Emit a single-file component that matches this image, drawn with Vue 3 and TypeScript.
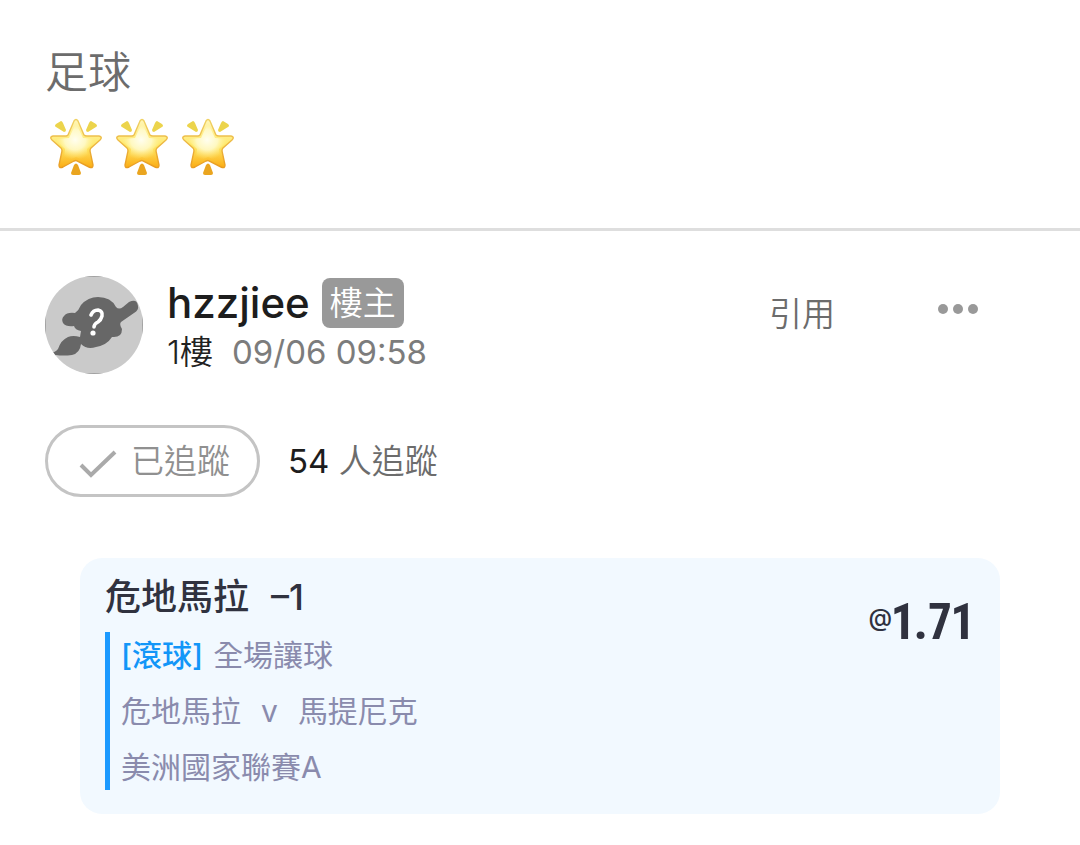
<script setup lang="ts">
import { ref } from 'vue'

const stars = [0, 1, 2]
const following = ref(true)
const post = { author: 'hzzjiee', badge: '樓主', floor: '1樓', time: '09/06 09:58', followers: 54 }
const bet = {
  pick: '危地馬拉',
  handicap: '–1',
  tag: '[滾球]',
  market: '全場讓球',
  home: '危地馬拉',
  away: '馬提尼克',
  league: '美洲國家聯賽A',
  odds: '1.71',
}
</script>

<template>
  <main class="page">
    <section class="topic">
      <h1 class="topic-title">足球</h1>
      <div class="stars" role="img" aria-label="三顆星">
        <svg v-for="n in stars" :key="n" class="star" viewBox="0 0 54 58" aria-hidden="true">
          <defs>
            <linearGradient :id="`body-${n}`" x1="0" y1="0" x2="0" y2="1">
              <stop offset="0" stop-color="#fff6b8" />
              <stop offset="0.55" stop-color="#ffe96a" />
              <stop offset="1" stop-color="#fbac12" />
            </linearGradient>
            <radialGradient :id="`glow-${n}`" cx="0.48" cy="0.42" r="0.5">
              <stop offset="0" stop-color="#fffef0" />
              <stop offset="0.5" stop-color="#fffbd0" stop-opacity="0.85" />
              <stop offset="1" stop-color="#ffee80" stop-opacity="0" />
            </radialGradient>
            <linearGradient :id="`edge-${n}`" x1="0" y1="0" x2="0" y2="1">
              <stop offset="0" stop-color="#f0d264" />
              <stop offset="1" stop-color="#e99c20" />
            </linearGradient>
          </defs>
          <path d="M7 6L12 3Q13 3 14 5L17 12Q17 14 15 14L7 9Q5 8 7 6Z" fill="#ecd44c" />
          <path d="M47 6L42 3Q41 3 40 5L37 12Q37 14 39 14L47 9Q49 8 47 6Z" fill="#ecd44c" />
          <path d="M25 47Q27 44 29 47L32 55Q32 57 30 57H24Q22 57 22 55Z" fill="#eaa51f" />
          <path
            d="M25 3Q27 0 29 3L35 17Q36 18 38 18L50 18Q54 19 51 22L42 30Q41 31 41 33L44 47Q44 51 40 49L28 43Q27 42 25 43L14 49Q10 51 10 47L13 33Q13 31 12 30L3 22Q0 19 4 18L17 18Q18 18 19 17Z"
            :fill="`url(#body-${n})`"
            :stroke="`url(#edge-${n})`"
            stroke-width="1.4"
          />
          <path
            d="M27 5L34 20L48 21L38 31L40 45L27 39L14 45L16 31L6 21L20 20Z"
            :fill="`url(#glow-${n})`"
          />
        </svg>
      </div>
    </section>

    <article class="post">
      <header class="post-head">
        <svg class="avatar" viewBox="0 0 98 98" role="img" aria-label="頭像">
          <defs>
            <clipPath id="avatar-clip"><circle cx="49" cy="49" r="49" /></clipPath>
          </defs>
          <g clip-path="url(#avatar-clip)">
            <rect width="98" height="98" fill="#cacaca" />
            <path
              d="M19 40Q22 36 30 37Q34 34 36 29Q43 21 53 21Q66 21 71 31Q74 34 78 31L84 26Q92 22 93 30Q94 34 89 37L76 46Q74 48 77 53Q77 62 67 61Q62 69 51 71Q42 74 36 68Q35 77 27 79Q18 80 11 79L3 84L4 77Q10 77 13 73Q16 64 23 61Q28 59 35 61L36 55Q30 54 29 50Q21 51 18 47Q16 43 19 40Z"
              fill="#676767"
            />
            <path
              d="M46 39Q48 34 53 34Q58 35 57 40Q56 44 53 46Q49 48 49 51"
              fill="none"
              stroke="#fff"
              stroke-width="3.6"
              stroke-linecap="round"
            />
            <circle cx="48" cy="57" r="2.600" fill="#fff" />
            <path d="M35 0.500H63M35 97.500H63M0.500 35V63M97.500 35V63" stroke="#a2a2a2" />
          </g>
        </svg>
        <div class="who">
          <div class="name-row">
            <a class="name" href="#">{{ post.author }}</a>
            <span class="badge">{{ post.badge }}</span>
          </div>
          <div class="meta">
            <span class="floor">{{ post.floor }}</span>
            <time class="time">{{ post.time }}</time>
          </div>
        </div>
        <div class="actions">
          <button class="plain" type="button">引用</button>
          <button class="plain" type="button" aria-label="更多">
            <svg class="dots" viewBox="0 0 40 12" aria-hidden="true">
              <circle cx="5" cy="6" r="5" />
              <circle cx="20" cy="6" r="5" />
              <circle cx="35" cy="6" r="5" />
            </svg>
          </button>
        </div>
      </header>

      <div class="follow-row">
        <button class="follow" type="button" :aria-pressed="following" @click="following = !following">
          <svg class="check" viewBox="0 0 38 28" aria-hidden="true">
            <path d="M2 15L12 25L36 2" />
          </svg>
          <span>已追蹤</span>
        </button>
        <p class="followers"><span class="count">{{ post.followers }}</span> 人追蹤</p>
      </div>

      <section class="bet">
        <div class="bet-info">
          <h2 class="bet-title"><span>{{ bet.pick }}</span><span>{{ bet.handicap }}</span></h2>
          <div class="bet-lines">
            <p><span class="tag">{{ bet.tag }}</span><span>{{ bet.market }}</span></p>
            <p class="teams"><span>{{ bet.home }}</span><span>v</span><span>{{ bet.away }}</span></p>
            <p>{{ bet.league }}</p>
          </div>
        </div>
        <p class="odds"><span class="at">@</span>{{ bet.odds }}</p>
      </section>
    </article>
  </main>
</template>

<style>
body {
  margin: 0;
  background: #fff;
}
</style>

<style scoped>
.page {
  font-family: Inter, "Noto Sans CJK TC", sans-serif;
  color: #222;
}
h1,
h2,
p {
  margin: 0;
  font-weight: 400;
}
button {
  font-family: inherit;
  cursor: pointer;
}
.topic {
  padding: 44px 45px 52px;
  border-bottom: 3px solid #dedede;
}
.topic-title {
  font-size: 43px;
  line-height: 56px;
  font-weight: 350;
  color: #6c6c6c;
}
.stars {
  display: flex;
  gap: 12px;
  margin: 18px 0 0 4px;
}
.star {
  width: 54px;
  height: 58px;
}
.post {
  padding: 45px;
}
.post-head {
  display: flex;
  align-items: flex-start;
}
.avatar {
  width: 98px;
  height: 98px;
  flex: none;
}
.who {
  margin-left: 24px;
}
.name-row {
  display: flex;
  align-items: center;
  gap: 12px;
  margin-top: 2px;
}
.name {
  font-size: 42px;
  line-height: 50px;
  font-weight: 500;
  color: #1d1d1d;
  text-decoration: none;
}
.badge {
  padding: 0 8px;
  border-radius: 8px;
  background: #999;
  color: #fff;
  font-size: 33px;
  line-height: 50px;
  font-weight: 350;
}
.meta {
  display: flex;
  gap: 19px;
  margin-top: 3px;
  font-size: 33px;
  line-height: 42px;
}
.floor {
  font-weight: 350;
}
.time {
  color: #7c7c7c;
}
.actions {
  display: flex;
  align-items: center;
  gap: 103px;
  margin: 10px 57px 0 auto;
}
.plain {
  padding: 0;
  border: 0;
  background: none;
  font-size: 33px;
  line-height: 56px;
  font-weight: 350;
  color: #6c6c6c;
}
.dots {
  display: block;
  width: 40px;
  height: 12px;
  margin-bottom: 10px;
  fill: #999;
}
.follow-row {
  display: flex;
  align-items: center;
  gap: 28px;
  margin-top: 51px;
}
.follow {
  display: flex;
  align-items: center;
  gap: 14px;
  padding: 0 27px 0 31px;
  border: 3px solid #c4c4c4;
  border-radius: 36px;
  background: #fff;
  font-size: 33px;
  line-height: 66px;
  font-weight: 350;
  color: #909090;
}
.check {
  width: 38px;
  height: 28px;
  margin-top: 6px;
  fill: none;
  stroke: #aaa;
  stroke-width: 4;
}
.followers {
  font-size: 33px;
  line-height: 66px;
  font-weight: 350;
  color: #6c6c6c;
}
.count {
  font-weight: 400;
  color: #1d1d1d;
}
.bet {
  display: flex;
  justify-content: space-between;
  align-items: flex-start;
  margin: 61px 35px 0;
  padding: 14px 27px 24px 25px;
  border-radius: 22px;
  background: #f2f9ff;
}
.bet-title {
  display: flex;
  gap: 22px;
  font-size: 36px;
  line-height: 50px;
  font-weight: 500;
  color: #30323f;
}
.bet-lines {
  margin-top: 10px;
  padding-left: 11px;
  border-left: 5px solid #1c9aff;
  font-size: 30px;
  color: #8a8bad;
}
.bet-lines p {
  display: flex;
  gap: 10px;
  line-height: 46px;
}
.bet-lines p + p {
  margin-top: 10px;
}
.bet-lines .teams {
  gap: 20px;
}
.tag {
  font-weight: 500;
  color: #1296f8;
}
.odds {
  display: flex;
  align-items: center;
  margin-top: 22px;
  font-family: "Liberation Sans Narrow", "Roboto Condensed", Roboto, sans-serif;
  font-size: 50px;
  font-variant-numeric: proportional-nums;
  line-height: 56px;
  font-weight: 700;
  color: #30323f;
}
.at {
  font-family: Inter, sans-serif;
  font-size: 24px;
  font-weight: 500;
  line-height: 48px;
  align-self: flex-start;
}
</style>
